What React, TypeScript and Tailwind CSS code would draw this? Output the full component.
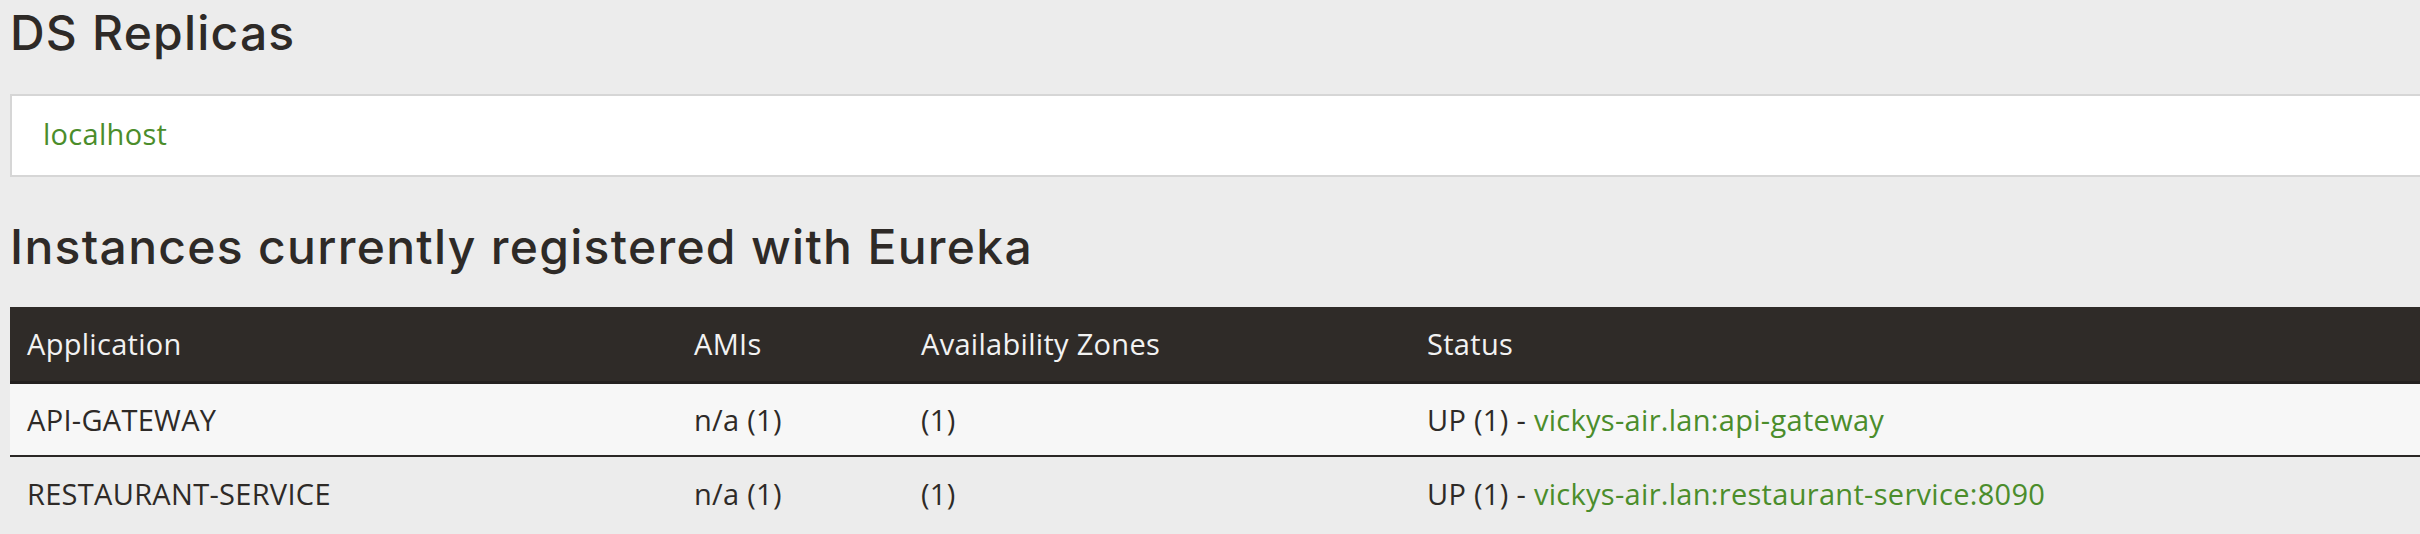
import React from "react";

const rows = [
  { app: "API-GATEWAY", amis: "n/a (1)", zones: "(1)", host: "vickys-air.lan:api-gateway" },
  { app: "RESTAURANT-SERVICE", amis: "n/a (1)", zones: "(1)", host: "vickys-air.lan:restaurant-service:8090" },
];

export default function App() {
  return (
    <div
      className="w-screen h-[534px] overflow-hidden bg-[#ececec] text-[#2e2a27] pl-[10px]"
      style={{ fontFamily: '"Open Sans", "Liberation Sans", sans-serif' }}
    >
      <h1
        className="mt-[4px] text-[48px] leading-[1.2] font-medium tracking-[1.2px]"
        style={{ fontFamily: 'Inter, "Open Sans", sans-serif' }}
      >
        DS Replicas
      </h1>

      <div className="mt-[32px] w-[2440px] h-[83px] bg-white border-2 border-[#d6d6d6] flex items-center pl-[31px]">
        <a className="text-[29px] text-[#4b8d2b] pb-[2px] tracking-[0.3px]">localhost</a>
      </div>

      <h2
        className="mt-[41px] text-[48px] leading-[1.2] font-medium tracking-[1.3px]"
        style={{ fontFamily: 'Inter, "Open Sans", sans-serif' }}
      >
        Instances currently registered with Eureka
      </h2>

      <table className="mt-[32px] w-[2440px] border-collapse text-[29px] text-left tracking-[0.3px]">
        <thead>
          <tr className="bg-[#2f2b28] text-[#f2f2f2] h-[75px] border-b-[3px] border-[#242120]">
            <th className="w-[667px] pl-[17px] font-normal">Application</th>
            <th className="w-[227px] pl-[17px] font-normal">AMIs</th>
            <th className="w-[506px] pl-[17px] font-normal">Availability Zones</th>
            <th className="pl-[17px] font-normal">Status</th>
          </tr>
        </thead>
        <tbody>
          {rows.map((r, i) => (
            <tr
              key={r.app}
              className={i === 0 ? "bg-[#f7f7f7] h-[74px] border-b-2 border-[#2a2725]" : "h-[74px]"}
            >
              <td className="pl-[17px]">{r.app}</td>
              <td className="pl-[17px]">{r.amis}</td>
              <td className="pl-[17px]">{r.zones}</td>
              <td className="pl-[17px]">
                UP (1) - <a className="text-[#4b8d2b]">{r.host}</a>
              </td>
            </tr>
          ))}
        </tbody>
      </table>
    </div>
  );
}
